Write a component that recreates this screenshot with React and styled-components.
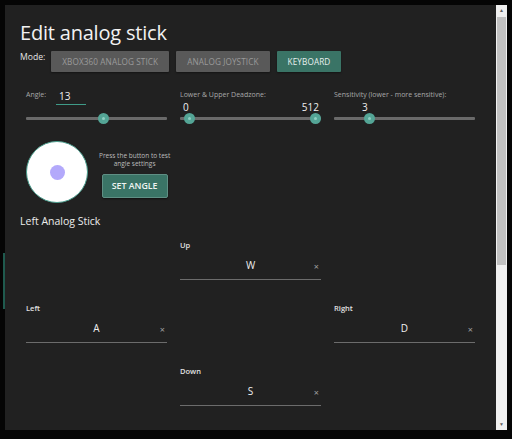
import React, { useState } from 'react'
import styled, { createGlobalStyle } from 'styled-components'

const GlobalStyle = createGlobalStyle`
  html, body {
    margin: 0;
    padding: 0;
    background: #050505;
  }
  * { box-sizing: border-box; }
`

const MODES = ['XBOX360 ANALOG STICK', 'ANALOG JOYSTICK', 'KEYBOARD']

const KEYS = [
    { dir: 'Up', key: 'W', col: 2 },
    { dir: 'Left', key: 'A', col: 1 },
    { dir: 'Right', key: 'D', col: 3 },
    { dir: 'Down', key: 'S', col: 2 },
]

const Slider = ({ values }) => (
    <Track>
        {values.map((v, i) => (
            <Thumb key={i} style={{ left: `${v}%` }} />
        ))}
    </Track>
)

const App = () => {
    const [mode, setMode] = useState('KEYBOARD')

    return (
        <Frame>
            <GlobalStyle />
            <Handle />
            <Panel>
                <Content>
                    <Title>Edit analog stick</Title>
                    <ModeRow>
                        <ModeLabel>Mode:</ModeLabel>
                        {MODES.map((m) => (
                            <ModeButton key={m} active={m === mode} onClick={() => setMode(m)}>
                                {m}
                            </ModeButton>
                        ))}
                    </ModeRow>

                    <Settings>
                        <Setting>
                            <AngleRow>
                                <SmallLabel>Angle:</SmallLabel>
                                <AngleInput>13</AngleInput>
                            </AngleRow>
                            <Slider values={[55]} />
                        </Setting>
                        <Setting>
                            <SmallLabel>Lower &amp; Upper Deadzone:</SmallLabel>
                            <Values>
                                <span>0</span>
                                <span>512</span>
                            </Values>
                            <Slider values={[7, 96]} />
                        </Setting>
                        <Setting>
                            <SmallLabel>Sensitivity (lower - more sensitive):</SmallLabel>
                            <Values indent>
                                <span>3</span>
                            </Values>
                            <Slider values={[25]} />
                        </Setting>
                    </Settings>

                    <TestRow>
                        <Stick>
                            <Dot />
                        </Stick>
                        <TestBox>
                            <Hint>Press the button to test<br />angle settings</Hint>
                            <SetButton>SET ANGLE</SetButton>
                        </TestBox>
                    </TestRow>

                    <Subtitle>Left Analog Stick</Subtitle>

                    <KeyGrid>
                        {KEYS.map((k) => (
                            <KeyField key={k.dir} col={k.col}>
                                <KeyLabel>{k.dir}</KeyLabel>
                                <KeyInput>
                                    <KeyValue>{k.key}</KeyValue>
                                    <Clear>×</Clear>
                                </KeyInput>
                            </KeyField>
                        ))}
                    </KeyGrid>
                </Content>
            </Panel>
            <Scrollbar>
                <Arrow>▲</Arrow>
                <ScrollTrack>
                    <ScrollThumb />
                </ScrollTrack>
                <Arrow>▼</Arrow>
            </Scrollbar>
        </Frame>
    )
}

const Frame = styled.div`
    position: relative;
    width: 512px;
    height: 439px;
    padding: 5px 5px 9px 5px;
    display: flex;
    background: #050505;
    font-family: "Open Sans", "Noto Sans", sans-serif;
    color: #e8e8e8;
`

const Handle = styled.div`
    position: absolute;
    left: 3px;
    top: 253px;
    width: 2px;
    height: 56px;
    background: #1f5a4e;
`

const Panel = styled.div`
    flex: 1;
    background: #212121;
    overflow: hidden;
`

const Content = styled.div`
    padding: 15px 21px 0 15px;
`

const Title = styled.h1`
    margin: 0;
    font-size: 20px;
    font-weight: 400;
    line-height: 26px;
    color: #f2f2f2;
    letter-spacing: -0.2px;
`

const ModeRow = styled.div`
    display: flex;
    align-items: flex-start;
    gap: 7px;
    margin-top: 4px;
`

const ModeLabel = styled.span`
    font-size: 8.6px;
    line-height: 14px;
    color: #e6e6e6;
    margin-right: -1px;
`

const ModeButton = styled.button`
    height: 21px;
    margin-top: 1px;
    padding: 0 11px;
    border: none;
    border-radius: 1px;
    font-family: inherit;
    font-size: 8.2px;
    letter-spacing: 0.1px;
    background: ${(p) => (p.active ? '#3a7466' : '#595959')};
    color: ${(p) => (p.active ? '#e8f0ee' : '#9a9a9a')};
    box-shadow: 0 1px 2px rgba(0, 0, 0, 0.4);
`

const Settings = styled.div`
    display: grid;
    grid-template-columns: repeat(3, 141px);
    column-gap: 13px;
    margin: 17px 0 0 6px;
`

const Setting = styled.div`
    display: flex;
    flex-direction: column;
`

const AngleRow = styled.div`
    display: flex;
    align-items: flex-start;
    gap: 10px;
    height: 25px;
`

const SmallLabel = styled.span`
    font-size: 7px;
    line-height: 11px;
    color: #a8a8a8;
    white-space: nowrap;
`

const AngleInput = styled.div`
    width: 30px;
    height: 16px;
    font-size: 10px;
    line-height: 14px;
    color: #f0f0f0;
    padding-left: 3px;
    border-bottom: 1px solid #3f9b88;
`

const Values = styled.div`
    display: flex;
    justify-content: space-between;
    height: 14px;
    padding: 0 ${(p) => (p.indent ? '0 0 28px' : '2px 0 3px')};
    font-size: 10px;
    line-height: 14px;
    color: #f0f0f0;
`

const Track = styled.div`
    position: relative;
    height: 3px;
    margin-top: 3px;
    background: #6a6a6a;
    border-radius: 1px;
`

const Thumb = styled.div`
    position: absolute;
    top: 50%;
    width: 11px;
    height: 11px;
    margin: -5.5px 0 0 -5.5px;
    border-radius: 50%;
    background: #54a596;
    &::after {
        content: '';
        position: absolute;
        left: 4px;
        top: 4px;
        width: 3px;
        height: 3px;
        border-radius: 50%;
        background: #8fd0c3;
    }
`

const TestRow = styled.div`
    display: flex;
    align-items: center;
    gap: 11px;
    margin: 21px 0 0 6px;
`

const Stick = styled.div`
    width: 62px;
    height: 62px;
    border-radius: 50%;
    background: #ffffff;
    border: 1px solid #4a9c8c;
    display: flex;
    align-items: center;
    justify-content: center;
`

const Dot = styled.div`
    width: 15px;
    height: 15px;
    border-radius: 50%;
    background: #b3a9fb;
`

const TestBox = styled.div`
    display: flex;
    flex-direction: column;
    align-items: center;
    gap: 6px;
    margin-top: 6px;
`

const Hint = styled.div`
    font-size: 6.5px;
    line-height: 8px;
    color: #bdbdbd;
    text-align: center;
`

const SetButton = styled.button`
    width: 66px;
    height: 24px;
    border: 1px solid #5f8f84;
    border-radius: 2px;
    background: #3a7466;
    color: #eef4f2;
    font-family: inherit;
    font-size: 8.8px;
    font-weight: 600;
    box-shadow: 0 1px 2px rgba(0, 0, 0, 0.5);
`

const Subtitle = styled.div`
    margin-top: 11px;
    font-size: 10.5px;
    line-height: 14px;
    color: #ececec;
`

const KeyGrid = styled.div`
    display: grid;
    grid-template-columns: repeat(3, 141px);
    column-gap: 13px;
    row-gap: 23px;
    margin: 12px 0 0 6px;
`

const KeyField = styled.div`
    grid-column: ${(p) => p.col};
    display: flex;
    flex-direction: column;
`

const KeyLabel = styled.div`
    font-size: 7.5px;
    line-height: 10px;
    color: #e0e0e0;
    font-weight: 600;
`

const KeyInput = styled.div`
    position: relative;
    height: 30px;
    border-bottom: 1px solid #6c6c6c;
    display: flex;
    align-items: flex-start;
    justify-content: center;
`

const KeyValue = styled.span`
    font-size: 10px;
    line-height: 14px;
    color: #f0f0f0;
    margin-top: 8px;
`

const Clear = styled.span`
    position: absolute;
    right: 2px;
    top: 12px;
    font-size: 9px;
    line-height: 10px;
    color: #a0a0a0;
`

const Scrollbar = styled.div`
    width: 11px;
    display: flex;
    flex-direction: column;
    background: #f0f0f0;
`

const Arrow = styled.div`
    height: 11px;
    font-size: 5px;
    line-height: 11px;
    text-align: center;
    color: #606060;
`

const ScrollTrack = styled.div`
    flex: 1;
    padding: 1px 1px;
`

const ScrollThumb = styled.div`
    height: 248px;
    background: #c1c1c1;
`

export default App
